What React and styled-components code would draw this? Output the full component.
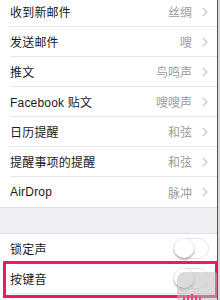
import React from "react";
import styled, { createGlobalStyle } from "styled-components";

const Global = createGlobalStyle`
  html, body { margin: 0; padding: 0; background: #d9d9d9; }
  body { width: 220px; height: 300px; overflow: hidden; }
`;

const Screen = styled.div`
  position: relative;
  width: 217px;
  height: 300px;
  overflow: hidden;
  background: #efeff4;
  border-right: 1px solid #555;
  font-family: "Liberation Sans", "Noto Sans CJK SC", sans-serif;
`;

const Group = styled.div`
  background: #fff;
  margin-top: ${(p) => p.$top || 0}px;
  border-bottom: 1px solid #e0e0e4;
  border-top: ${(p) => (p.$lineTop ? "1px solid #e0e0e4" : "none")};
`;

const Row = styled.div`
  display: flex;
  align-items: center;
  height: 30px;
  margin-left: 10px;
  padding-right: 9px;
  box-sizing: border-box;
  border-bottom: ${(p) => (p.$last ? "none" : "1px solid #e6e6ea")};
  padding-bottom: ${(p) => (p.$last ? 0 : 0)}px;
`;

const Label = styled.span`
  flex: 1;
  font-size: 12px;
  color: #1a1a1a;
  letter-spacing: 0.2px;
`;

const Value = styled.span`
  font-size: 12px;
  color: #9a9a9f;
  margin-right: 10px;
`;

const Spacer = styled.div`
  height: 25px;
`;

const Toggle = styled.div`
  position: relative;
  width: 35px;
  height: 21px;
  border-radius: 11px;
  box-sizing: border-box;
  border: 1.5px solid #e4e4e8;
  background: #fff;
  margin-right: -1px;
`;

const Knob = styled.div`
  position: absolute;
  left: -1px;
  top: -1px;
  width: 20px;
  height: 20px;
  border-radius: 50%;
  background: #fff;
  box-shadow: 0 2px 3px rgba(0, 0, 0, 0.28), 0 0 0 0.5px rgba(0, 0, 0, 0.08);
`;

const Highlight = styled.div`
  position: absolute;
  left: 3px;
  top: 261px;
  width: 215px;
  height: 37px;
  box-sizing: border-box;
  border: 3px solid #ea1d5a;
`;

const Bubble = styled.div`
  position: absolute;
  left: 177px;
  top: 272px;
  width: 44px;
  height: 34px;
  border-radius: 8px;
  background: rgba(190, 190, 190, 0.55);
`;

const Marks = styled.div`
  position: absolute;
  left: 183px;
  top: 294px;
  display: flex;
  gap: 2px;
`;

const Mark = styled.span`
  width: 2px;
  height: ${(p) => p.$h}px;
  margin-top: ${(p) => 6 - p.$h}px;
  background: #e64a7a;
`;

const Chevron = () => (
  <svg width="6" height="10" viewBox="0 0 6 10">
    <path d="M0.8 0.8 L5 5 L0.8 9.2" fill="none" stroke="#c4c4c9" strokeWidth="1.2" />
  </svg>
);

const sounds = [
  ["收到新邮件", "丝绸"],
  ["发送邮件", "嗖"],
  ["推文", "鸟鸣声"],
  ["Facebook 贴文", "嗖嗖声"],
  ["日历提醒", "和弦"],
  ["提醒事项的提醒", "和弦"],
  ["AirDrop", "脉冲"],
];

export default function App() {
  return (
    <Screen>
      <Global />
      <Group $top={-3}>
        {sounds.map(([label, value], i) => (
          <Row key={label} $last={i === sounds.length - 1}>
            <Label>{label}</Label>
            <Value>{value}</Value>
            <Chevron />
          </Row>
        ))}
      </Group>
      <Spacer />
      <Group $lineTop>
        <Row>
          <Label>锁定声</Label>
          <Toggle>
            <Knob />
          </Toggle>
        </Row>
        <Row>
          <Label>按键音</Label>
          <Toggle>
            <Knob />
          </Toggle>
        </Row>
        <Row $last />
      </Group>
      <Highlight />
      <Bubble />
      <Marks>
        <Mark $h={3} />
        <Mark $h={5} />
        <Mark $h={6} />
        <Mark $h={4} />
        <Mark $h={3} />
      </Marks>
    </Screen>
  );
}
